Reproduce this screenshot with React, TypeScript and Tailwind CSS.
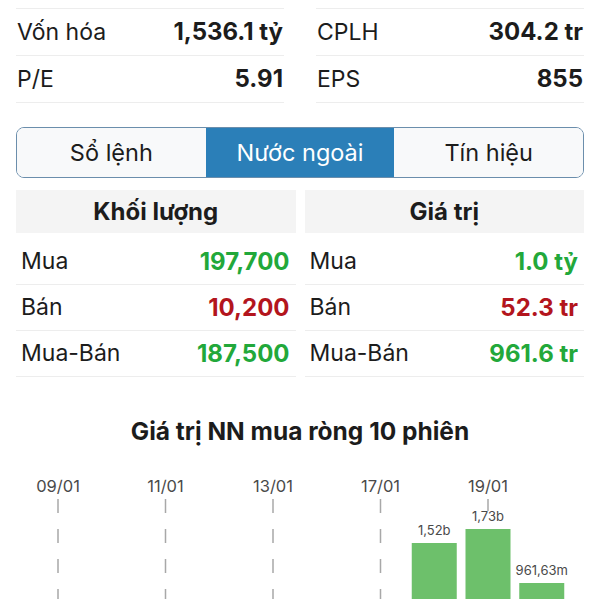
import React from "react";

const font = { fontFamily: "Inter, 'Liberation Sans', Arial, sans-serif" };

function StatRow({ label, value }: { label: string; value: string }) {
  return (
    <div className="flex h-[47px] items-center justify-between border-b border-[#ededed] pl-px pr-px">
      <span className="text-[23px] text-[#1c1c1c]">{label}</span>
      <span className="text-[24px] font-bold text-[#1c1c1c]">{value}</span>
    </div>
  );
}

function DataRow({ label, value, color }: { label: string; value: string; color: string }) {
  return (
    <div className="flex h-[46px] items-center justify-between border-b border-[#ededed] pl-[5px] pr-[6px]">
      <span className="text-[23px] text-[#1c1c1c]">{label}</span>
      <span className={`text-[24px] font-bold ${color}`}>{value}</span>
    </div>
  );
}

function Chart() {
  const start = 58;
  const pitch = 53.75;
  const labels: { i: number; t: string }[] = [
    { i: 0, t: "09/01" },
    { i: 2, t: "11/01" },
    { i: 4, t: "13/01" },
    { i: 6, t: "17/01" },
    { i: 8, t: "19/01" },
  ];
  const bars = [
    { i: 7, top: 544, label: "1,52b" },
    { i: 8, top: 530, label: "1,73b" },
    { i: 9, top: 584, label: "961,63m" },
  ];
  const oy = 468;
  return (
    <svg width="600" height="132" viewBox={`0 ${oy} 600 132`} className="block">
      {labels.map((l) => {
        const x = start + l.i * pitch;
        return (
          <g key={l.t}>
            <text
              x={x}
              y={493}
              textAnchor="middle"
              fontSize="16.5"
              fill="#4a4a4a"
              fontFamily="Inter, 'Liberation Sans', Arial, sans-serif"
            >
              {l.t}
            </text>
            <line
              x1={x}
              x2={x}
              y1={500}
              y2={610}
              stroke="#a8a8a8"
              strokeWidth="1.5"
              strokeDasharray={l.i === 8 ? "12 100" : "14 16"}
            />
          </g>
        );
      })}
      {bars.map((b) => {
        const cx = start + b.i * pitch;
        return (
          <g key={b.label}>
            <rect x={cx - 22.5} y={b.top} width={45} height={120} fill="#6dc06b" />
            <text
              x={cx}
              y={b.top - 8}
              textAnchor="middle"
              fontSize="13"
              fill="#4a4a4a"
              fontFamily="Inter, 'Liberation Sans', Arial, sans-serif"
            >
              {b.label}
            </text>
          </g>
        );
      })}
    </svg>
  );
}

export default function App() {
  return (
    <div className="h-[600px] w-[600px] overflow-hidden bg-white" style={font}>
      <div className="grid grid-cols-2 gap-x-8 px-4 pt-2">
        <div className="border-t border-[#ededed]">
          <StatRow label="Vốn hóa" value="1,536.1 tỷ" />
          <StatRow label="P/E" value="5.91" />
        </div>
        <div className="border-t border-[#ededed]">
          <StatRow label="CPLH" value="304.2 tr" />
          <StatRow label="EPS" value="855" />
        </div>
      </div>

      <div className="mx-4 mt-[24px] flex h-[51px] overflow-hidden rounded-[8px] border-[1.5px] border-[#6b8eac]">
        <div className="flex flex-1 items-center justify-center bg-[#f8f9fa] text-[23.5px] text-[#1c1c1c]">Sổ lệnh</div>
        <div className="flex flex-1 items-center justify-center bg-[#2b7fb8] text-[23.5px] text-white">Nước ngoài</div>
        <div className="flex flex-1 items-center justify-center bg-[#f8f9fa] text-[23.5px] text-[#1c1c1c]">Tín hiệu</div>
      </div>

      <div className="mt-[12px] grid grid-cols-2 gap-x-[9px] px-4">
        <div>
          <div className="flex h-[43px] items-center justify-center bg-[#f4f4f4] text-[24px] font-bold text-[#1c1c1c]">
            Khối lượng
          </div>
          <div className="pt-[6px]">
            <DataRow label="Mua" value="197,700" color="text-[#22a83a]" />
            <DataRow label="Bán" value="10,200" color="text-[#b3151d]" />
            <DataRow label="Mua-Bán" value="187,500" color="text-[#22a83a]" />
          </div>
        </div>
        <div>
          <div className="flex h-[43px] items-center justify-center bg-[#f4f4f4] text-[24px] font-bold text-[#1c1c1c]">
            Giá trị
          </div>
          <div className="pt-[6px]">
            <DataRow label="Mua" value="1.0 tỷ" color="text-[#22a83a]" />
            <DataRow label="Bán" value="52.3 tr" color="text-[#b3151d]" />
            <DataRow label="Mua-Bán" value="961.6 tr" color="text-[#22a83a]" />
          </div>
        </div>
      </div>

      <div className="mt-[38px] text-center text-[24.5px] font-bold leading-[32px] text-[#1c1c1c]">
        Giá trị NN mua ròng 10 phiên
      </div>

      <div className="mt-[20px]">
        <Chart />
      </div>
    </div>
  );
}
